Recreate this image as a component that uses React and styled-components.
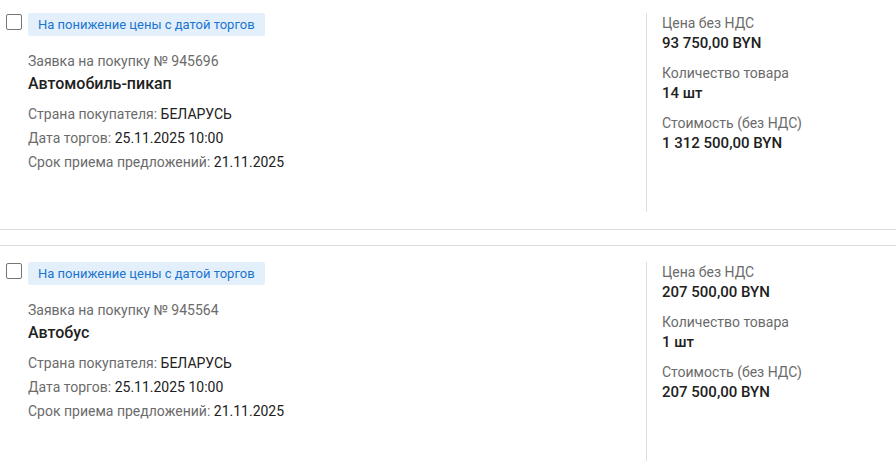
import styled, { createGlobalStyle } from "styled-components";

const GlobalStyle = createGlobalStyle`
  body {
    margin: 0;
    background: #fff;
    font-family: Roboto, "Liberation Sans", Arial, sans-serif;
    color: #212121;
    overflow: hidden;
  }
`;

const lots = [
  {
    id: "945696",
    title: "Автомобиль-пикап",
    country: "БЕЛАРУСЬ",
    date: "25.11.2025 10:00",
    deadline: "21.11.2025",
    price: "93 750,00 BYN",
    qty: "14 шт",
    total: "1 312 500,00 BYN",
  },
  {
    id: "945564",
    title: "Автобус",
    country: "БЕЛАРУСЬ",
    date: "25.11.2025 10:00",
    deadline: "21.11.2025",
    price: "207 500,00 BYN",
    qty: "1 шт",
    total: "207 500,00 BYN",
  },
];

export default function App() {
  return (
    <>
      <GlobalStyle />
      <List>
        {lots.map((lot, i) => (
          <Card key={lot.id} $first={i === 0}>
            <Main>
              <TopRow>
                <Checkbox type="checkbox" />
                <Badge>На понижение цены с датой торгов</Badge>
              </TopRow>
              <Body>
                <RequestNo>Заявка на покупку № {lot.id}</RequestNo>
                <Title>{lot.title}</Title>
                <Details>
                  <Detail>
                    Страна покупателя: <Value>{lot.country}</Value>
                  </Detail>
                  <Detail>
                    Дата торгов: <Value>{lot.date}</Value>
                  </Detail>
                  <Detail>
                    Срок приема предложений: <Value>{lot.deadline}</Value>
                  </Detail>
                </Details>
              </Body>
            </Main>
            <Side>
              <Field>
                <FieldLabel>Цена без НДС</FieldLabel>
                <FieldValue>{lot.price}</FieldValue>
              </Field>
              <Field>
                <FieldLabel>Количество товара</FieldLabel>
                <FieldValue>{lot.qty}</FieldValue>
              </Field>
              <Field>
                <FieldLabel>Стоимость (без НДС)</FieldLabel>
                <FieldValue>{lot.total}</FieldValue>
              </Field>
            </Side>
          </Card>
        ))}
      </List>
    </>
  );
}

const List = styled.div`
  display: flex;
  flex-direction: column;
  margin-top: -3px;
`;

const Card = styled.div`
  display: flex;
  padding: 16px 0 17px;
  height: 199px;
  border-bottom: 1px solid #dedede;
  border-top: ${(p) => (p.$first ? "none" : "1px solid #dedede")};
  margin-top: ${(p) => (p.$first ? "0" : "15px")};
`;

const Main = styled.div`
  width: 646px;
  flex-shrink: 0;
  display: flex;
  flex-direction: column;
`;

const TopRow = styled.div`
  display: flex;
  align-items: flex-start;
  gap: 6px;
  padding-left: 6px;
`;

const Checkbox = styled.input`
  appearance: none;
  margin: 1px 0 0;
  width: 16px;
  height: 16px;
  border: 1px solid #767676;
  border-radius: 2px;
  background: #fff;
  box-sizing: border-box;
`;

const Badge = styled.span`
  display: inline-flex;
  align-items: center;
  height: 23px;
  padding: 0 10px;
  background: #e3f0fc;
  border-radius: 2px;
  color: #1b74d0;
  font-size: 13px;
`;

const Body = styled.div`
  padding: 15px 0 0 28px;
  display: flex;
  flex-direction: column;
`;

const RequestNo = styled.div`
  font-size: 14px;
  line-height: 20px;
  color: #6b6b6b;
`;

const Title = styled.div`
  margin-top: 2px;
  font-size: 16px;
  line-height: 22px;
  font-weight: 500;
  color: #212121;
`;

const Details = styled.div`
  margin-top: 7px;
  display: flex;
  flex-direction: column;
`;

const Detail = styled.div`
  font-size: 14px;
  line-height: 24px;
  color: #6b6b6b;
`;

const Value = styled.span`
  color: #212121;
`;

const Side = styled.div`
  flex: 1;
  border-left: 1px solid #dedede;
  padding-left: 15px;
  display: flex;
  flex-direction: column;
  gap: 9px;
`;

const Field = styled.div`
  display: flex;
  flex-direction: column;
`;

const FieldLabel = styled.div`
  font-size: 14px;
  line-height: 20px;
  color: #6b6b6b;
`;

const FieldValue = styled.div`
  font-size: 15px;
  line-height: 21px;
  font-weight: 500;
  color: #212121;
`;
